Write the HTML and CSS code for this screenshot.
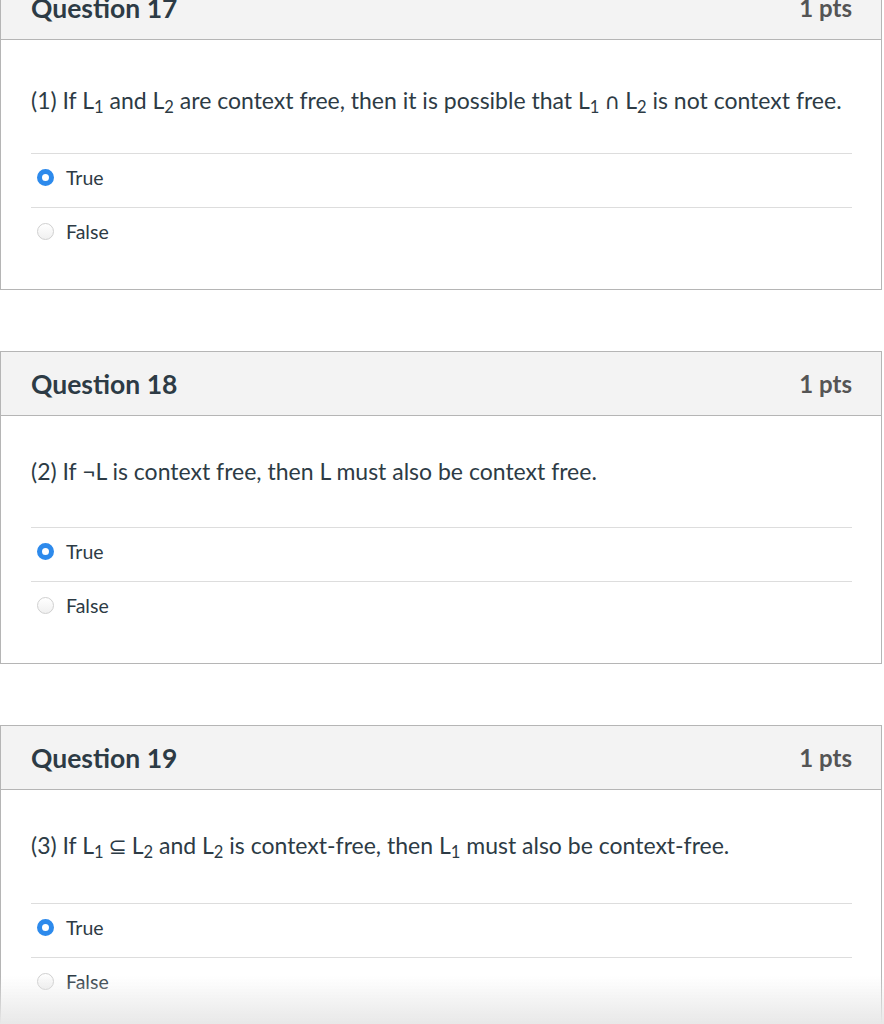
FILE: index.html
```html
<!DOCTYPE html>
<html>
<head>
<meta charset="utf-8">
<link rel="stylesheet" href="styles.css">
</head>
<body>
<div class="page">
  <div class="card">
    <div class="head"><span class="title">Question 17</span><span class="pts">1 pts</span></div>
    <div class="body">
      <div class="qtext low">(1) If L<sub>1</sub> and L<sub>2</sub> are context free, then it is possible that L<sub>1</sub> <span class="sym">∩</span> L<sub>2</sub> is not context free.</div>
      <div class="answers">
        <div class="ans"><span class="radio on"></span><span class="lbl">True</span></div>
        <div class="ans"><span class="radio"></span><span class="lbl">False</span></div>
      </div>
    </div>
  </div>
  <div class="card">
    <div class="head"><span class="title">Question 18</span><span class="pts">1 pts</span></div>
    <div class="body">
      <div class="qtext">(2) If ¬L is context free, then L must also be context free.</div>
      <div class="answers">
        <div class="ans"><span class="radio on"></span><span class="lbl">True</span></div>
        <div class="ans"><span class="radio"></span><span class="lbl">False</span></div>
      </div>
    </div>
  </div>
  <div class="card">
    <div class="head"><span class="title">Question 19</span><span class="pts">1 pts</span></div>
    <div class="body">
      <div class="qtext">(3) If L<sub>1</sub> <span class="sym">⊆</span> L<sub>2</sub> and L<sub>2</sub> is context-free, then L<sub>1</sub> must also be context-free.</div>
      <div class="answers">
        <div class="ans"><span class="radio on"></span><span class="lbl">True</span></div>
        <div class="ans"><span class="radio"></span><span class="lbl">False</span></div>
      </div>
    </div>
  </div>
</div>
<div class="fade"></div>
</body>
</html>
```
FILE: styles.css
```css
html, body {
  margin: 0;
  padding: 0;
  background: #fff;
  overflow: hidden;
}
body {
  font-family: Lato, "Noto Sans", sans-serif;
  color: #2d3b45;
}
.page {
  margin-top: -25px;
  width: 884px;
}
.card {
  width: 880px;
  border: 1px solid #b5b5b5;
  margin-bottom: 61px;
}
.head {
  height: 63px;
  background: #f3f3f3;
  border-bottom: 1px solid #b5b5b5;
  display: flex;
  align-items: center;
  justify-content: space-between;
  padding: 0 29px 0 30px;
}
.title {
  font-size: 26.5px;
  font-weight: 700;
  color: #2d3b45;
}
.pts {
  font-size: 24px;
  font-weight: 700;
  color: #555;
}
.body {
  padding: 39px 29px 28px 30px;
}
.qtext {
  font-size: 23px;
  line-height: 32px;
  margin-bottom: 40px;
}
.qtext.low {
  padding-top: 5px;
  margin-bottom: 35px;
}
sub {
  font-size: 0.72em;
  vertical-align: -0.22em;
  line-height: 0;
}
.sym {
  font-family: "DejaVu Sans", sans-serif;
  font-size: 0.95em;
  margin: 0 -1px;
}
.ans {
  border-top: 1px solid #dddddd;
  height: 53px;
  box-sizing: content-box;
  display: flex;
  align-items: center;
  padding-left: 6px;
}
.ans > span {
  position: relative;
  top: -3px;
}
.radio {
  width: 17px;
  height: 17px;
  border-radius: 50%;
  box-sizing: border-box;
  border: 1px solid #d0d0d0;
  background: linear-gradient(#ffffff, #f0f0f0);
  margin-right: 12px;
}
.radio.on {
  border: 5px solid #2d8aec;
  background: #fff;
}
.lbl {
  font-size: 19.5px;
}
.fade {
  position: fixed;
  left: 0;
  right: 0;
  bottom: 0;
  height: 48px;
  background: linear-gradient(rgba(255,255,255,0), rgba(232,232,232,1));
  pointer-events: none;
}
```
